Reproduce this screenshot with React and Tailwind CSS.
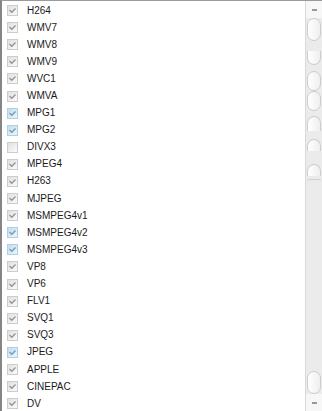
import React from 'react';
import clsx from 'clsx';

const codecs = [
  { name: 'H264', checked: true },
  { name: 'WMV7', checked: true },
  { name: 'WMV8', checked: true },
  { name: 'WMV9', checked: true },
  { name: 'WVC1', checked: true },
  { name: 'WMVA', checked: true },
  { name: 'MPG1', checked: true, hot: true },
  { name: 'MPG2', checked: true, hot: true },
  { name: 'DIVX3', checked: false },
  { name: 'MPEG4', checked: true },
  { name: 'H263', checked: true },
  { name: 'MJPEG', checked: true },
  { name: 'MSMPEG4v1', checked: true },
  { name: 'MSMPEG4v2', checked: true, hot: true },
  { name: 'MSMPEG4v3', checked: true, hot: true },
  { name: 'VP8', checked: true },
  { name: 'VP6', checked: true },
  { name: 'FLV1', checked: true },
  { name: 'SVQ1', checked: true },
  { name: 'SVQ3', checked: true },
  { name: 'JPEG', checked: true, hot: true },
  { name: 'APPLE', checked: true },
  { name: 'CINEPAC', checked: true },
  { name: 'DV', checked: true }
];

const CheckBox = ({ checked, hot }) => (
  <span
    className={clsx(
      'w-[11px] h-[11px] border flex items-center justify-center shrink-0',
      hot
        ? 'border-[#b4cee0] bg-linear-to-br from-[#bfdff0] to-[#eaf6fc]'
        : 'border-[#cccccc] bg-linear-to-br from-[#e0e0e0] to-[#fbfbfb]'
    )}
  >
    {checked && (
      <svg width="9" height="9" viewBox="0 0 9 9">
        <path
          d="M1.5 4 L3.8 6.3 L7.5 2.5"
          fill="none"
          stroke={hot ? '#7898b0' : '#939393'}
          strokeWidth="1.3"
        />
      </svg>
    )}
  </span>
);

const pill = 'mx-px shrink-0 border border-[#cdcdcd] bg-linear-to-r from-white to-[#efefef]';

const ScrollBar = () => (
  <div className="w-[17px] shrink-0 flex flex-col bg-[#ebebeb] border-l border-[#d9d9d9]">
    <div className="h-[17px] shrink-0 bg-[#f7f7f7] flex items-center justify-center">
      <span className="w-[5px] h-[2px] bg-[#9a9a9a]" />
    </div>
    <div className={clsx(pill, 'h-[23px] rounded-[10px]')} />
    <div className="h-[10px] shrink-0" />
    <div className={clsx(pill, 'h-[14px] rounded-b-[10px] border-t-0')} />
    <div className="h-[6px] shrink-0" />
    <div className={clsx(pill, 'h-[20px] rounded-[10px]')} />
    <div className={clsx(pill, 'h-[20px] rounded-[10px]')} />
    <div className="h-[5px] shrink-0" />
    <div className={clsx(pill, 'h-[15px] rounded-t-[10px] border-b-0')} />
    <div className="h-[8px] shrink-0" />
    <div className={clsx(pill, 'h-[12px] rounded-t-[10px] border-b-0')} />
    <div className="h-[13px] shrink-0" />
    <div className={clsx(pill, 'h-[12px] rounded-t-[10px] border-b-0')} />
    <div className="h-[3px] shrink-0" />
    <div className="mx-px h-[3px] shrink-0 rounded-t-[10px] border-t border-[#d0d0d0]" />
    <div className="flex-1" />
    <div className={clsx(pill, 'h-[23px] rounded-[10px]')} />
    <div className="h-[17px] shrink-0 bg-[#f7f7f7] flex items-center justify-center">
      <span className="w-[5px] h-[2px] bg-[#9a9a9a]" />
    </div>
  </div>
);

export default function App() {
  return (
    <div className="w-[322px] h-[411px] flex bg-white overflow-hidden border-l-2 border-[#858585] border-t border-t-[#9a9a9a] font-['Liberation_Sans',Arial,sans-serif]">
      <div className="flex-1 pt-px overflow-hidden">
        {codecs.map((c) => (
          <div key={c.name} className="h-[17.1px] flex items-center pl-[5px] gap-[9px]">
            <CheckBox checked={c.checked} hot={c.hot} />
            <span className="text-[10px] leading-none text-[#1a1a1a]">{c.name}</span>
          </div>
        ))}
      </div>
      <ScrollBar />
    </div>
  );
}
